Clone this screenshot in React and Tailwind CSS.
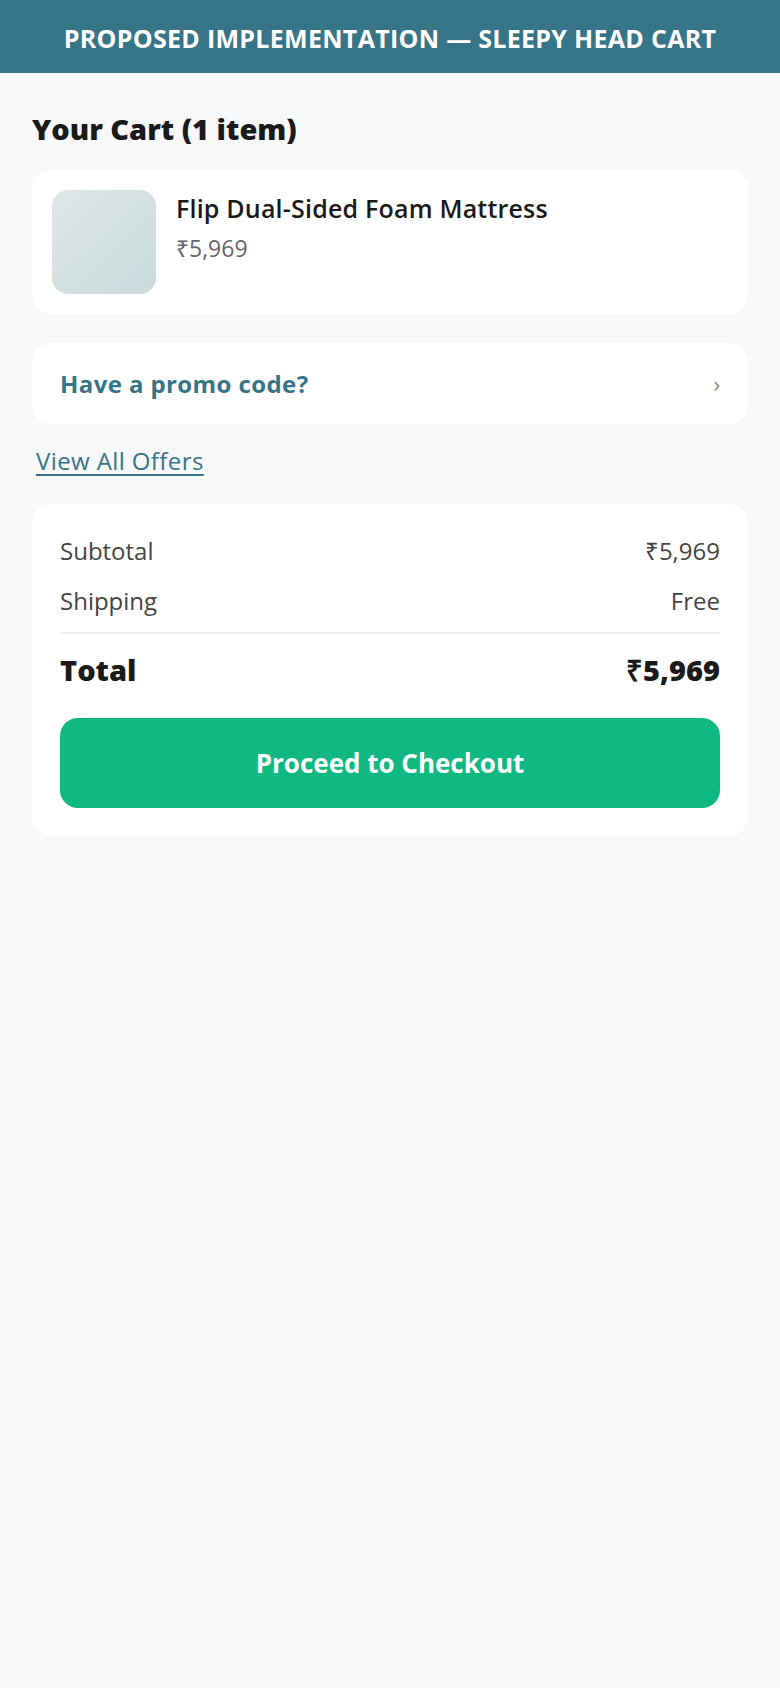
export default function App() {
  return (
    <div className="min-h-screen bg-[#f7f8fa] font-['Open_Sans',sans-serif]">
      <header className="h-[73px] pt-[4px] flex items-center justify-center bg-[#367587] text-white font-bold text-[25px] tracking-[0.3px] uppercase">
        Proposed Implementation — Sleepy Head Cart
      </header>
      <main className="px-8 pt-[36px]">
        <h1 className="text-[29px] leading-[40px] font-extrabold text-[#1a1a1a]">Your Cart (1 item)</h1>
        <div className="mt-[21px] rounded-[20px] bg-white p-5 flex gap-[20px]">
          <div className="w-[104px] h-[104px] rounded-[16px] bg-gradient-to-br from-[#dfe8e8] to-[#c9dadc] shrink-0"></div>
          <div className="pt-[2px]">
            <div className="text-[25px] leading-[32px] font-semibold text-[#1a1a1a] tracking-[0.2px]">Flip Dual-Sided Foam Mattress</div>
            <div className="mt-[8px] text-[23px] leading-[32px] text-[#666666]">₹5,969</div>
          </div>
        </div>
        <div className="mt-[29px] h-[81px] rounded-[20px] bg-white px-[28px] flex items-center justify-between">
          <span className="text-[24px] font-bold text-[#367587] tracking-[0.4px]">Have a promo code?</span>
          <span className="text-[22px] text-[#888888]">›</span>
        </div>
        <div className="mt-[22px] ml-[4px]">
          <a className="text-[24px] leading-[30px] text-[#367587] underline underline-offset-[4px] tracking-[0.4px]">View All Offers</a>
        </div>
        <div className="mt-[28px] rounded-[20px] bg-white px-[28px] pt-[31px] pb-[28px]">
          <div className="flex justify-between text-[24px] leading-[32px] text-[#444444]">
            <span>Subtotal</span>
            <span>₹5,969</span>
          </div>
          <div className="mt-[18px] flex justify-between text-[24px] leading-[32px] text-[#444444]">
            <span>Shipping</span>
            <span>Free</span>
          </div>
          <div className="mt-[15px] h-[2px] bg-[#eeeeee]"></div>
          <div className="mt-[18px] flex justify-between text-[29px] leading-[36px] font-extrabold text-[#1a1a1a]">
            <span>Total</span>
            <span>₹5,969</span>
          </div>
          <button className="mt-[30px] w-full h-[90px] rounded-[18px] bg-[#10b981] text-white text-[26px] font-bold">
            Proceed to Checkout
          </button>
        </div>
      </main>
    </div>
  );
}
